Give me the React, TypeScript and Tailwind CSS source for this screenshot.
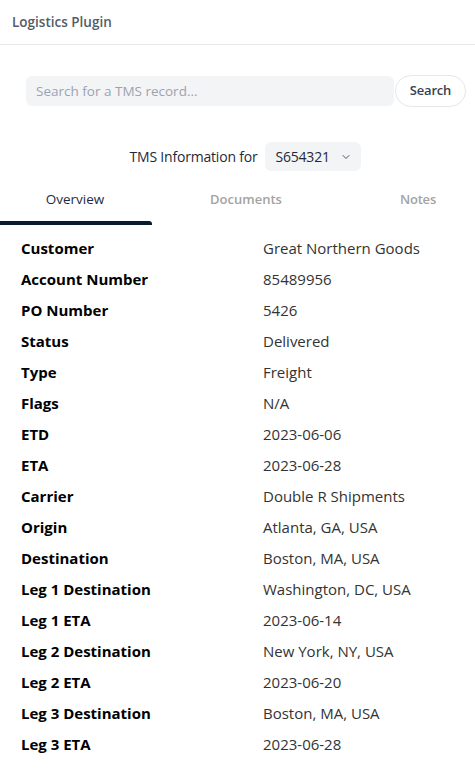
import React from "react";

const rows: [string, string][] = [
  ["Customer", "Great Northern Goods"],
  ["Account Number", "85489956"],
  ["PO Number", "5426"],
  ["Status", "Delivered"],
  ["Type", "Freight"],
  ["Flags", "N/A"],
  ["ETD", "2023-06-06"],
  ["ETA", "2023-06-28"],
  ["Carrier", "Double R Shipments"],
  ["Origin", "Atlanta, GA, USA"],
  ["Destination", "Boston, MA, USA"],
  ["Leg 1 Destination", "Washington, DC, USA"],
  ["Leg 1 ETA", "2023-06-14"],
  ["Leg 2 Destination", "New York, NY, USA"],
  ["Leg 2 ETA", "2023-06-20"],
  ["Leg 3 Destination", "Boston, MA, USA"],
  ["Leg 3 ETA", "2023-06-28"],
];

export default function App() {
  return (
    <div
      className="w-[475px] h-[773px] overflow-hidden bg-white"
      style={{ fontFamily: '"Open Sans", "Noto Sans", sans-serif' }}
    >
      <div className="h-[45px] border-b border-[#e5e7eb] flex items-center px-3">
        <span className="text-[13.5px] font-semibold text-[#555b66]">Logistics Plugin</span>
      </div>

      <div className="flex items-center pl-[26px] pr-[9px] mt-[30px]">
        <div className="flex-1 h-[30px] bg-[#f3f4f6] rounded-md flex items-center px-[10px]">
          <span className="text-[13.5px] text-[#9ca3af]">Search for a TMS record...</span>
        </div>
        <button className="ml-[1px] w-[71px] h-[32px] rounded-full border border-[#e5e7eb] bg-white text-[13px] font-semibold text-[#374151] tracking-[-0.2px]">
          Search
        </button>
      </div>

      <div className="flex items-center justify-center mt-[35px] gap-2 pl-[16px]">
        <span className="text-[14px] text-[#1f2937] tracking-[-0.2px]">TMS Information for</span>
        <div className="h-[29px] w-[96px] rounded-md bg-[#f3f4f6] flex items-center pl-[10px] gap-[10px]">
          <span className="text-[14px] text-[#1f2937] tracking-[-0.2px]">S654321</span>
          <svg width="12" height="12" viewBox="0 0 24 24" fill="none" stroke="#4b5563" strokeWidth="2" strokeLinecap="round" strokeLinejoin="round">
            <path d="M6 9l6 6 6-6" />
          </svg>
        </div>
      </div>

      <div className="flex mt-[11px] h-[43px] overflow-hidden">
        <div className="w-[152px] shrink-0 flex flex-col">
          <div className="flex-1 flex items-center justify-center text-[13.5px] font-medium text-[#1e2a45] pb-[4px] pr-[2px]">
            Overview
          </div>
          <div className="h-[4px] bg-[#0b1a33] rounded-tr-[3px]" />
        </div>
        <div className="w-[188px] shrink-0 flex items-center justify-center text-[13px] font-semibold text-[#a3a3a3] pb-[8px]">
          Documents
        </div>
        <div className="w-[156px] shrink-0 flex items-center justify-center text-[13px] font-semibold text-[#a3a3a3] tracking-[-0.2px] pb-[8px]">
          Notes
        </div>
      </div>

      <div className="pl-[21px] pt-[8px]">
        {rows.map(([k, v]) => (
          <div key={k} className="flex h-[31px] items-center">
            <div className="w-[242px] text-[15px] font-bold text-black">{k}</div>
            <div className="text-[15px] text-[#333333]">{v}</div>
          </div>
        ))}
      </div>
    </div>
  );
}
